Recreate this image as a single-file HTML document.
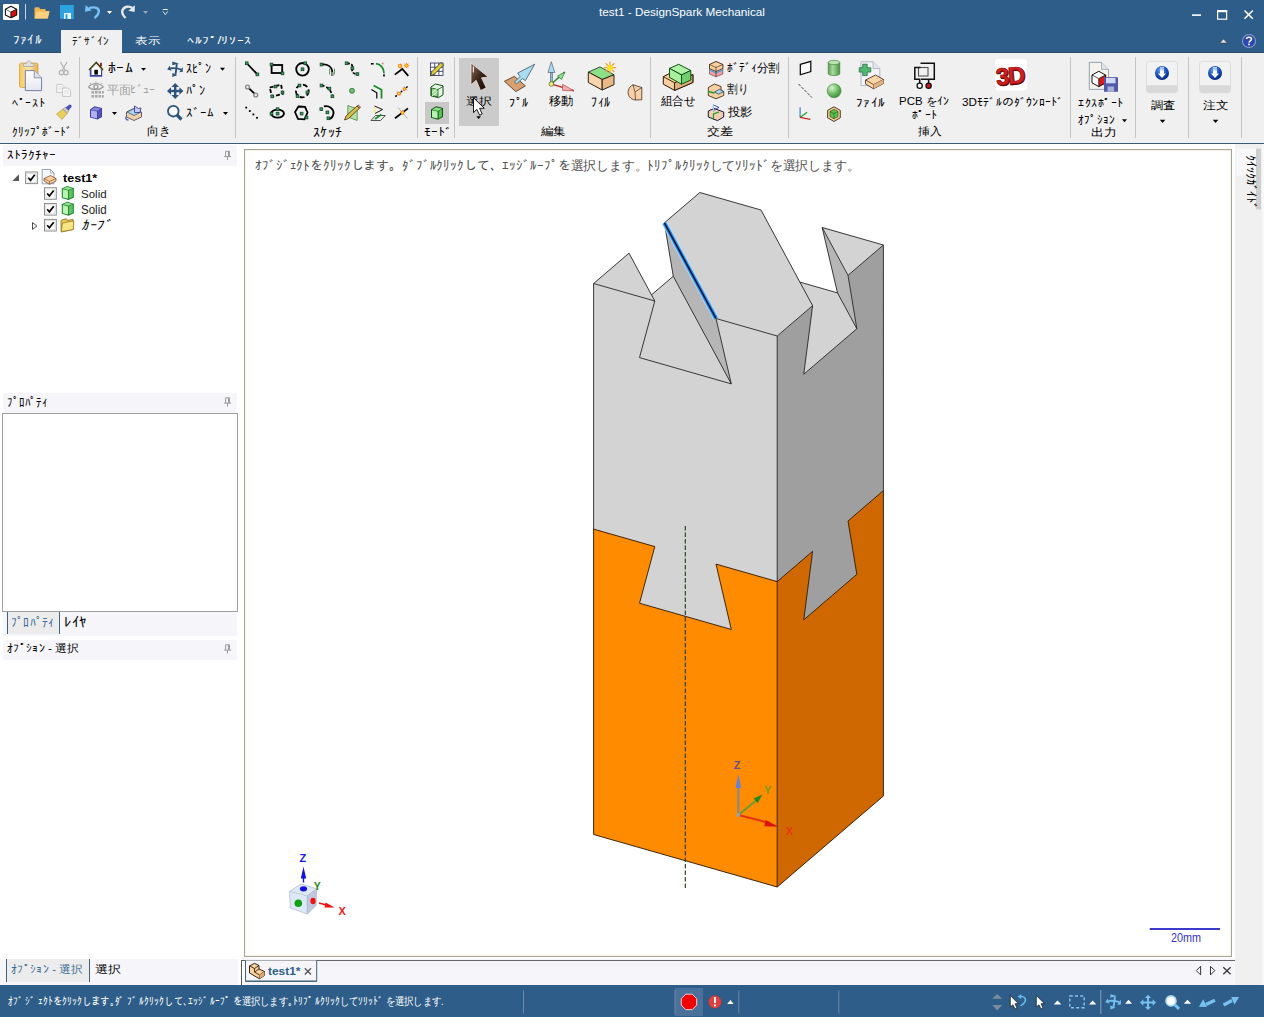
<!DOCTYPE html>
<html><head><meta charset="utf-8">
<style>
html,body{margin:0;padding:0;width:1264px;height:1017px;overflow:hidden;background:#f0f0f0;font-family:"Liberation Sans",sans-serif;font-size:13px;color:#000;}
.a{position:absolute;white-space:nowrap;line-height:1;transform-origin:0 0;}
.b{position:absolute;}
</style></head><body>
<!-- title bar + tab row -->
<div class="b" style="left:0;top:0;width:1264px;height:53px;background:#2d5d88"></div>
<div class="b" style="left:0;top:52px;width:1264px;height:1px;background:#2a4c6c"></div>
<div class="b" style="left:61px;top:30px;width:61px;height:23px;background:#f0f0f0"></div>
<!-- ribbon -->
<div class="b" style="left:0;top:53px;width:1264px;height:89px;background:#f0f0f0"></div>
<div class="b" style="left:0;top:142px;width:1264px;height:1px;background:#e6f4fb"></div>
<div class="b" style="left:0;top:143px;width:1264px;height:1px;background:#44586c"></div>
<!-- left panel -->
<div class="b" style="left:0;top:144px;width:241px;height:815px;background:#fff"></div>
<div class="b" style="left:3px;top:145px;width:234px;height:21px;background:#f5f5fa"></div>
<div class="b" style="left:3px;top:393px;width:234px;height:20px;background:#f5f5fa"></div>
<div class="b" style="left:2px;top:413px;width:234px;height:197px;border:1px solid #a0a0a0;background:#fff"></div>
<div class="b" style="left:3px;top:612px;width:234px;height:24px;background:#f5f5fa"></div>
<div class="b" style="left:7px;top:612px;width:51px;height:22px;background:#ececec;border-left:1px solid #3c6382;border-right:1px solid #3c6382"></div>
<div class="b" style="left:3px;top:640px;width:234px;height:20px;background:#f5f5fa"></div>
<!-- viewport -->
<div class="b" style="left:241px;top:144px;width:994px;height:814px;background:#fff"></div>
<div class="b" style="left:244px;top:149px;width:986px;height:806px;border:1px solid #a7a596;background:#fff;box-shadow:inset 0 0 0 1px #f6f4e6"></div>
<!-- right strip -->
<div class="b" style="left:1235px;top:144px;width:29px;height:841px;background:#f0f0f0"></div>
<div class="b" style="left:1262px;top:144px;width:2px;height:841px;background:#f8f8f8"></div>
<!-- bottom tab bar -->
<div class="b" style="left:0;top:959px;width:238px;height:26px;background:#f5f5fa"></div>
<div class="b" style="left:6px;top:959px;width:82px;height:23px;background:#ececec;border-left:1px solid #3c6382;border-right:1px solid #3c6382"></div>
<div class="b" style="left:241px;top:958px;width:994px;height:27px;background:#f5f5fa"></div>
<div class="b" style="left:238px;top:958px;width:3px;height:27px;background:#fff"></div>
<!-- status bar -->
<div class="b" style="left:0;top:985px;width:1264px;height:32px;background:#2d5d88"></div>

<svg style="position:absolute;left:0;top:0" width="1264" height="1017" viewBox="0 0 1264 1017">
<polygon points="639.50,357.62 731.30,383.88 673.25,276.25 620.15,321.75" fill="#d3d3d3"/>
<polygon points="716.00,318.50 664.40,222.83 673.25,276.25 731.30,383.88" fill="#b6b6b6"/>
<polygon points="803.75,374.25 856.85,328.75 837.50,292.88 745.70,266.62" fill="#d3d3d3"/>
<polygon points="822.20,227.50 848.00,275.33 856.85,328.75 837.50,292.88" fill="#b6b6b6"/>
<polygon points="593.60,283.50 654.80,301.00 639.50,357.62 731.30,383.88 716.00,318.50 777.20,336.00 777.20,581.60 716.00,564.10 731.30,629.48 639.50,603.23 654.80,546.60 593.60,529.10" fill="#d3d3d3"/>
<polygon points="777.20,336.00 812.60,305.67 803.75,374.25 856.85,328.75 848.00,275.33 883.40,245.00 883.40,490.60 848.00,520.93 856.85,574.35 803.75,619.85 812.60,551.27 777.20,581.60" fill="#9f9f9f"/>
<polygon points="593.60,529.10 654.80,546.60 639.50,603.23 731.30,629.48 716.00,564.10 777.20,581.60 777.20,887.00 593.60,834.50" fill="#ff8c00"/>
<polygon points="777.20,581.60 812.60,551.27 803.75,619.85 856.85,574.35 848.00,520.93 883.40,490.60 883.40,796.00 777.20,887.00" fill="#cf6800"/>
<polygon points="593.60,283.50 654.80,301.00 629.00,253.17" fill="#d3d3d3"/>
<polygon points="664.40,222.83 699.80,192.50 761.00,210.00 812.60,305.67 777.20,336.00 716.00,318.50" fill="#d3d3d3"/>
<polygon points="822.20,227.50 883.40,245.00 848.00,275.33" fill="#d3d3d3"/>
<path d="M629.00,253.17 L593.60,283.50 L654.80,301.00 L629.00,253.17 M664.40,222.83 L699.80,192.50 L761.00,210.00 L812.60,305.67 L777.20,336.00 L716.00,318.50 M822.20,227.50 L883.40,245.00 L848.00,275.33 L822.20,227.50 M654.80,301.00 L639.50,357.62 L731.30,383.88 L716.00,318.50 M812.60,305.67 L803.75,374.25 L856.85,328.75 L848.00,275.33 M664.40,222.83 L673.25,276.25 L731.30,383.88 M856.85,328.75 L837.50,292.88 L822.20,227.50 M673.25,276.25 L651.50,294.89 M837.50,292.88 L799.90,282.12 M593.60,283.50 L593.60,529.10 M777.20,336.00 L777.20,581.60 M883.40,245.00 L883.40,490.60" fill="none" stroke="#242424" stroke-width="0.9" stroke-linejoin="miter"/>
<path d="M593.60,529.10 L654.80,546.60 L639.50,603.23 L731.30,629.48 L716.00,564.10 L777.20,581.60 L812.60,551.27 L803.75,619.85 L856.85,574.35 L848.00,520.93 L883.40,490.60 M593.60,529.10 L593.60,834.50 L777.20,887.00 L883.40,796.00 L883.40,490.60 M777.20,581.60 L777.20,887.00" fill="none" stroke="#2a1400" stroke-width="0.9" stroke-linejoin="miter"/>

<!-- app icon -->
<rect x="3" y="4" width="16" height="16" rx="1.2" fill="#fff"/>
<path d="M11 6.3 L16.6 9.2 L16.6 14.9 L10.9 17.7 L5.4 14.9 L5.4 9.2 Z" fill="#fff" stroke="#111" stroke-width="1.1" stroke-linejoin="round"/>
<path d="M10.9 12 L16.6 9.2 L16.6 14.9 L10.9 17.7 Z" fill="#e01010" stroke="#111" stroke-width="0.9" stroke-linejoin="round"/>
<path d="M5.4 9.2 L10.9 12" stroke="#111" stroke-width="0.6" fill="none"/>
<rect x="25" y="4" width="1" height="15.5" fill="#c6d6e6"/>
<!-- folder -->
<path d="M34.5 8 L34.5 18.5 L48 18.5 L49.5 11 L45.5 11 L45.5 9 L40 9 L39 7.2 L35.5 7.2 Z" fill="#f4b54e"/>
<path d="M34.5 18.5 L37 11.5 L49.5 11.5 L47.5 18.5 Z" fill="#fcd07e"/>
<!-- save -->
<path d="M60 5 L73.8 5 L73.8 19 L61 19 L60 18 Z" fill="#2ca2e0"/>
<rect x="64" y="13" width="7" height="6" fill="#e8f6ff"/>
<rect x="65.5" y="14.2" width="2" height="4.8" fill="#2ca2e0"/>
<!-- undo -->
<path d="M89 8.2 C95 6 99.5 8.5 98.8 12 C98.3 14.5 96.5 16.5 94.5 18.2" fill="none" stroke="#78c0f6" stroke-width="2.4" stroke-linecap="butt"/>
<path d="M85 11.8 L85.6 5 L91.6 10.6 Z" fill="#78c0f6"/>
<path d="M107 11 L112 11 L109.5 14 Z" fill="#fff"/>
<!-- redo -->
<path d="M125.5 18 C123 15.5 121.5 13 122.5 10 C124 6.5 129 5.5 132.5 8" fill="none" stroke="#e8e8ec" stroke-width="2.4"/>
<path d="M135 5.3 L134.6 12 L128.4 10.8 Z" fill="#e8e8ec"/>
<path d="M143 11 L148 11 L145.5 14 Z" fill="#9aa6b4"/>
<!-- customize -->
<rect x="162.8" y="9" width="5" height="1" fill="#e8eef4"/>
<path d="M162.8 11.3 L165.3 14.6 L167.8 11.3" fill="none" stroke="#e8eef4" stroke-width="0.9"/>
<!-- window controls -->
<rect x="1192" y="14.3" width="9" height="1.6" fill="#fff"/>
<rect x="1217.6" y="10.6" width="9" height="8.6" fill="none" stroke="#fff" stroke-width="1.2"/>
<rect x="1217" y="10" width="10.2" height="2.2" fill="#fff"/>
<path d="M1244.5 10.5 L1252.8 18.8 M1252.8 10.5 L1244.5 18.8" stroke="#fff" stroke-width="1.6"/>
<path d="M1219.8 43 L1223.5 39 L1227.2 43 Z" fill="#e6e6e6" stroke="#333" stroke-width="0.5"/>
<circle cx="1249" cy="41" r="7" fill="#8aa0c8"/>
<circle cx="1249" cy="41" r="6" fill="#2a48b0"/>
<path d="M1246.5 39 C1246.5 36.5 1251.5 36.5 1251.5 39 C1251.5 40.8 1249 40.8 1249 42.6" fill="none" stroke="#fff" stroke-width="1.5"/>
<rect x="1248.2" y="43.6" width="1.7" height="1.7" fill="#fff"/>
<!-- separators -->
<g fill="#c4c4c4">
<rect x="79" y="57" width="1" height="81"/>
<rect x="235" y="57" width="1" height="81"/>
<rect x="417" y="57" width="1" height="81"/>
<rect x="454" y="57" width="1" height="81"/>
<rect x="650" y="57" width="1" height="81"/>
<rect x="788" y="57" width="1" height="81"/>
<rect x="1070" y="57" width="1" height="81"/>
<rect x="1135" y="57" width="1" height="81"/>
<rect x="1188" y="57" width="1" height="81"/>
<rect x="1241" y="57" width="1" height="81"/>
</g>
<!-- paste -->
<defs>
<linearGradient id="gclip" x1="0" x2="1"><stop offset="0" stop-color="#f6c860"/><stop offset="0.5" stop-color="#fbe6a8"/><stop offset="1" stop-color="#e8b050"/></linearGradient>
<linearGradient id="gpaper" x1="0" y1="0" x2="0" y2="1"><stop offset="0" stop-color="#ffffff"/><stop offset="1" stop-color="#e6e6f2"/></linearGradient>
<radialGradient id="gblue" cx="0.4" cy="0.3" r="0.7"><stop offset="0" stop-color="#6aa0f0"/><stop offset="0.6" stop-color="#1a4fb8"/><stop offset="1" stop-color="#0a2a80"/></radialGradient>
<radialGradient id="ggreen" cx="0.35" cy="0.3" r="0.75"><stop offset="0" stop-color="#d8f4d0"/><stop offset="0.6" stop-color="#68b860"/><stop offset="1" stop-color="#3a8a38"/></radialGradient>
<linearGradient id="gcyl" x1="0" x2="1"><stop offset="0" stop-color="#5aa050"/><stop offset="0.4" stop-color="#a8dca0"/><stop offset="1" stop-color="#4a9044"/></linearGradient>
<linearGradient id="gsel" x1="0" y1="0" x2="1" y2="1"><stop offset="0" stop-color="#8a7060"/><stop offset="0.5" stop-color="#3a2418"/><stop offset="1" stop-color="#140800"/></linearGradient>
</defs>
<rect x="19.5" y="63" width="18.5" height="24.5" rx="2" fill="url(#gclip)" stroke="#d8a040" stroke-width="0.8"/>
<path d="M23.5 66.5 L23.5 63.5 L26.5 63.5 C26.5 60 31 60 31 63.5 L33.8 63.5 L33.8 66.5 Z" fill="#e0e0e0" stroke="#a8a8a8" stroke-width="0.8"/>
<path d="M25.3 70.6 L34.2 70.6 L41.6 77.8 L41.6 90.6 L25.3 90.6 Z" fill="url(#gpaper)" stroke="#7482a4" stroke-width="1"/>
<path d="M34.2 70.6 L34.2 77.8 L41.6 77.8" fill="#dde0ee" stroke="#7482a4" stroke-width="0.8"/>
<!-- scissors -->
<path d="M60.5 62 L65 70 M67 62 L62.5 70" stroke="#b0b0b0" stroke-width="1.2" fill="none"/>
<circle cx="61.5" cy="72.6" r="2.2" fill="none" stroke="#b4b4b4" stroke-width="1.3"/>
<circle cx="66" cy="72.6" r="2.2" fill="none" stroke="#b4b4b4" stroke-width="1.3"/>
<!-- copy -->
<path d="M56.7 84.5 L62 84.5 L64 86.5 L64 92.5 L56.7 92.5 Z" fill="#f8f8f8" stroke="#c4c4c4" stroke-width="0.9"/>
<path d="M62.5 88 L68 88 L70.6 90.6 L70.6 96.4 L62.5 96.4 Z" fill="#f8f8f8" stroke="#c0c0c0" stroke-width="0.9"/>
<path d="M58 87 L62 87 M58 89 L62 89 M64 91 L69 91 M64 93 L69 93" stroke="#d0d0d0" stroke-width="0.6"/>
<!-- brush -->
<path d="M56.5 114 L63 109 L67 113.5 L62 119.5 Z" fill="#e8d060" stroke="#b09030" stroke-width="0.6"/>
<path d="M63 109 L65.5 107 L69 110.5 L67 113.5 Z" fill="#c8c8c8" stroke="#808080" stroke-width="0.5"/>
<path d="M65.5 107.5 L69.5 104.5 C71.5 104.5 72 106 71.5 107 L68.5 110.5 Z" fill="#5050b8"/>
<!-- home -->
<path d="M89.8 76.8 L89.8 69.5 L92 69.5 L92 74.8 L100 74.8 L100 69.5 L102.2 69.5 L102.2 76.8 Z" fill="#3e45a0"/>
<path d="M91.5 70 L96.2 65.5 L101 70 L101 75 L91.5 75 Z" fill="#fff"/>
<rect x="94.3" y="69.8" width="3.6" height="4.8" fill="#000"/>
<path d="M89 70 L96.3 62.5 L103 70" fill="none" stroke="#454010" stroke-width="1.6"/>
<rect x="100.1" y="62.8" width="1.7" height="3.6" fill="#701010"/>
<path d="M141 68 L146 68 L143.5 70.8 Z" fill="#000"/>
<!-- spin -->
<g id="spin" fill="#2d5478">
<path d="M176.8 64 C176.3 67.5 176.3 71 175.3 74.8" fill="none" stroke="#2d5478" stroke-width="1.9"/>
<path d="M170.5 68.3 C174 67.8 178 68.3 181.5 69.6" fill="none" stroke="#2d5478" stroke-width="1.9"/>
<path d="M172.3 61.6 L178.8 63.4 L172.3 65.2 Z"/>
<path d="M172.3 73 L177.2 75.2 L172.3 77 Z"/>
<path d="M167.2 69.6 L169.6 65.8 L171.6 70.8 Z"/>
<path d="M182.8 67 L179.2 72.3 L182.8 71.8 Z"/>
</g>
<path d="M220 67.7 L225 67.7 L222.5 70.7 Z" fill="#000"/>
<!-- plan view (gray) -->
<g fill="none" stroke="#a0a0a0">
<path d="M88.5 87 C92 82.5 99.5 82.5 103.3 87 C99.5 90.5 92 90.5 88.5 87 Z" stroke-width="1.2"/>
<circle cx="95.9" cy="86.8" r="2" stroke-width="1.3"/>
<path d="M91 84 L90 82.8 M95.9 83 L95.9 81.5 M101 84 L102 82.8" stroke-width="0.8"/>
</g>
<g fill="#a8a8a8">
<rect x="91.5" y="91" width="2.6" height="2.6"/><rect x="95" y="91" width="2.6" height="2.6"/><rect x="98.5" y="91" width="2.6" height="2.6"/><rect x="102" y="91" width="1.8" height="2.6"/>
<rect x="91.5" y="95" width="2.6" height="2.6"/><rect x="95" y="95" width="2.6" height="2.6"/><rect x="98.5" y="95" width="2.6" height="2.6"/><rect x="102" y="95" width="1.8" height="2.6"/>
</g>
<!-- pan -->
<g fill="#2d5478">
<rect x="174" y="86" width="2.4" height="10"/>
<rect x="170" y="89.8" width="10.4" height="2.4"/>
<path d="M175.2 83 L179 87 L171.4 87 Z"/>
<path d="M175.2 99 L179 95 L171.4 95 Z"/>
<path d="M167 91 L171 87.2 L171 94.8 Z"/>
<path d="M183.4 91 L179.4 87.2 L179.4 94.8 Z"/>
</g>
<!-- cube (view) -->
<path d="M90 109.5 L94.5 106.3 L102 108 L102 117 L97.5 119.6 L90 117.5 Z" fill="#3a3a9a"/>
<path d="M91 110.2 L97 111.5 L97 118.5 L91 117 Z" fill="#b0b0f4"/>
<path d="M91 109.8 L94.8 107.3 L101 108.6 L97.2 111 Z" fill="#8484dc"/>
<path d="M97.8 111 L101.2 108.8 L101.2 116.6 L97.8 118.8 Z" fill="#5454b8"/>
<path d="M112 112 L117 112 L114.5 115 Z" fill="#000"/>
<!-- blueprint -->
<path d="M126.5 112 L134 108.5 L141.5 112 L141.5 117 L134 120.5 L126.5 117 Z" fill="#f0d0a8" stroke="#404060" stroke-width="0.8"/>
<path d="M127 112 L134 108.7 L141 112 L134 115.5 Z" fill="#a8d8f0" stroke="#304060" stroke-width="0.7"/>
<path d="M134.5 106 L134.5 112.5 L140 112.5 L141 108 L138.5 108.5 Z" fill="#c8c8f8" stroke="#303080" stroke-width="0.8"/>
<path d="M126.5 116.5 C125 118 126 120 128.5 120" fill="none" stroke="#6868b8" stroke-width="1.5"/>
<!-- zoom -->
<circle cx="173.3" cy="111.2" r="5.3" fill="#fff" stroke="#2d5478" stroke-width="1.8"/>
<path d="M177 115 L181.5 119.5" stroke="#2d5478" stroke-width="3.2"/>
<path d="M223 112 L228 112 L225.5 115 Z" fill="#000"/>
<path d="M247 63.5 L257.2 74.2" stroke="#000" fill="none" stroke-width="1.8"/>
<rect x="245.3" y="61.9" width="2.8" height="2.8" fill="#3a9a60" stroke="#0c3c1c" stroke-width="0.7"/>
<rect x="256.0" y="73.0" width="2.8" height="2.8" fill="#3a9a60" stroke="#0c3c1c" stroke-width="0.7"/>
<rect x="271.6" y="65" width="10.6" height="8" stroke="#000" fill="none" stroke-width="1.8"/>
<rect x="270.1" y="63.1" width="2.8" height="2.8" fill="#3a9a60" stroke="#0c3c1c" stroke-width="0.7"/>
<rect x="281.1" y="72.0" width="2.8" height="2.8" fill="#3a9a60" stroke="#0c3c1c" stroke-width="0.7"/>
<circle cx="302.5" cy="69.3" r="6.3" stroke="#000" fill="none" stroke-width="1.8"/>
<rect x="301.1" y="67.9" width="2.8" height="2.8" fill="#3a9a60" stroke="#0c3c1c" stroke-width="0.7"/>
<rect x="303.9" y="61.9" width="2.8" height="2.8" fill="#3a9a60" stroke="#0c3c1c" stroke-width="0.7"/>
<path d="M321.5 64.5 C327 63.5 332.3 66.5 332.3 72.5 L332.3 76" stroke="#000" fill="none" stroke-width="1.8"/>
<path d="M329.6 68.5 L329.6 74.5 M334.5 68.5 L334.5 74.5" stroke="#2a8a40" stroke-width="0.8" fill="none"/>
<rect x="331.4" y="72" width="1.8" height="4" fill="#888"/>
<rect x="320.1" y="63.1" width="2.8" height="2.8" fill="#3a9a60" stroke="#0c3c1c" stroke-width="0.7"/>
<path d="M346.8 63.3 C352 63 353 66 352.4 68.3 C351.5 70.5 352 74 357.4 74.1" stroke="#000" fill="none" stroke-width="1.7" stroke-dasharray="3 1.5"/>
<rect x="345.2" y="61.9" width="2.8" height="2.8" fill="#3a9a60" stroke="#0c3c1c" stroke-width="0.7"/>
<rect x="351.0" y="66.9" width="2.8" height="2.8" fill="#3a9a60" stroke="#0c3c1c" stroke-width="0.7"/>
<rect x="356.0" y="72.7" width="2.8" height="2.8" fill="#3a9a60" stroke="#0c3c1c" stroke-width="0.7"/>
<path d="M370.9 63.8 L373.6 63.8" stroke="#000" stroke-width="1.6"/>
<path d="M375.9 63.6 C380.5 64 384 68 384 73.2" stroke="#1a8a2a" stroke-width="1.7" fill="none"/>
<path d="M384 74.2 L384 76.6" stroke="#000" stroke-width="1.6"/>
<path d="M381.5 62.8 L383.5 62.8 L383.3 65 Z" fill="#c87060"/>
<path d="M394.8 74.6 L402.3 69 L408.3 75.9" stroke="#000" fill="none" stroke-width="1.8"/>
<polygon points="403.20,66.00 401.68,66.61 402.32,68.12 400.81,67.48 400.20,69.00 399.59,67.48 398.08,68.12 398.72,66.61 397.20,66.00 398.72,65.39 398.08,63.88 399.59,64.52 400.20,63.00 400.81,64.52 402.32,63.88 401.68,65.39" fill="#f07010"/>
<circle cx="400.2" cy="66.0" r="1.3" fill="#ffd020"/>
<polygon points="409.50,65.60 407.98,66.21 408.62,67.72 407.11,67.08 406.50,68.60 405.89,67.08 404.38,67.72 405.02,66.21 403.50,65.60 405.02,64.99 404.38,63.48 405.89,64.12 406.50,62.60 407.11,64.12 408.62,63.48 407.98,64.99" fill="#f07010"/>
<circle cx="406.5" cy="65.6" r="1.3" fill="#ffd020"/>
<path d="M249 88.3 L254.5 93.7" stroke="#000" fill="none" stroke-width="1.8"/>
<circle cx="247.5" cy="87" r="1.9" fill="none" stroke="#888" stroke-width="1.4"/><circle cx="255.8" cy="95" r="1.9" fill="none" stroke="#888" stroke-width="1.4"/>
<path d="M269.7 87.5 L281.1 84.6 L282.7 93.8 L272 96.6 Z" stroke="#000" fill="none" stroke-width="1.8" stroke-dasharray="4 2"/>
<rect x="274.1" y="85.1" width="2.8" height="2.8" fill="#3a9a60" stroke="#0c3c1c" stroke-width="0.7"/>
<rect x="281.1" y="91.1" width="2.8" height="2.8" fill="#3a9a60" stroke="#0c3c1c" stroke-width="0.7"/>
<rect x="270.9" y="95.0" width="2.8" height="2.8" fill="#3a9a60" stroke="#0c3c1c" stroke-width="0.7"/>
<circle cx="302.3" cy="91" r="6.4" stroke="#000" fill="none" stroke-width="1.8" stroke-dasharray="5 2.5"/>
<rect x="298.1" y="84.1" width="2.8" height="2.8" fill="#3a9a60" stroke="#0c3c1c" stroke-width="0.7"/>
<rect x="306.0" y="91.0" width="2.8" height="2.8" fill="#3a9a60" stroke="#0c3c1c" stroke-width="0.7"/>
<rect x="296.1" y="94.8" width="2.8" height="2.8" fill="#3a9a60" stroke="#0c3c1c" stroke-width="0.7"/>
<path d="M321.5 85.5 C327 86 331 90 332.4 96.3" stroke="#000" fill="none" stroke-width="1.7" stroke-dasharray="3 2"/>
<rect x="320.1" y="84.1" width="2.8" height="2.8" fill="#3a9a60" stroke="#0c3c1c" stroke-width="0.7"/>
<rect x="328.0" y="87.2" width="2.8" height="2.8" fill="#3a9a60" stroke="#0c3c1c" stroke-width="0.7"/>
<rect x="331.0" y="94.9" width="2.8" height="2.8" fill="#3a9a60" stroke="#0c3c1c" stroke-width="0.7"/>
<circle cx="352" cy="90.8" r="2.5" fill="#6cc070" stroke="#207030" stroke-width="0.8"/>
<path d="M371.4 89.6 L376.8 92.8 L376.8 98.5" stroke="#000" fill="none" stroke-width="1.2"/>
<path d="M373.6 85.5 L381.5 89.8 L381.5 98.5" stroke="#1a8a2a" fill="none" stroke-width="1.8"/>
<path d="M395.3 96.7 L408.3 85.9" stroke="#000" stroke-width="1.5" stroke-dasharray="2 1.5"/>
<path d="M396.5 91 L400 95.5 M404 86 L407.5 90.5" stroke="#a0a0a0" stroke-width="0.6"/>
<polygon points="401.60,93.60 400.29,94.14 400.84,95.44 399.54,94.89 399.00,96.20 398.46,94.89 397.16,95.44 397.71,94.14 396.40,93.60 397.71,93.06 397.16,91.76 398.46,92.31 399.00,91.00 399.54,92.31 400.84,91.76 400.29,93.06" fill="#f07010"/>
<circle cx="399.0" cy="93.6" r="1.1" fill="#ffd020"/>
<polygon points="407.10,89.00 405.79,89.54 406.34,90.84 405.04,90.29 404.50,91.60 403.96,90.29 402.66,90.84 403.21,89.54 401.90,89.00 403.21,88.46 402.66,87.16 403.96,87.71 404.50,86.40 405.04,87.71 406.34,87.16 405.79,88.46" fill="#f07010"/>
<circle cx="404.5" cy="89.0" r="1.1" fill="#ffd020"/>
<rect x="245.3" y="106.7" width="1.8" height="1.8" fill="#000"/>
<rect x="248.9" y="110.1" width="1.8" height="1.8" fill="#000"/>
<rect x="252.5" y="113.5" width="1.8" height="1.8" fill="#000"/>
<rect x="256.1" y="116.9" width="1.8" height="1.8" fill="#000"/>
<ellipse cx="277.6" cy="113.6" rx="6.4" ry="4" stroke="#000" fill="none" stroke-width="1.8"/>
<rect x="270.1" y="112.2" width="2.8" height="2.8" fill="#3a9a60" stroke="#0c3c1c" stroke-width="0.7"/>
<rect x="276.2" y="107.8" width="2.8" height="2.8" fill="#3a9a60" stroke="#0c3c1c" stroke-width="0.7"/>
<rect x="276.2" y="112.2" width="2.8" height="2.8" fill="#3a9a60" stroke="#0c3c1c" stroke-width="0.7"/>
<path d="M298.5 106.5 L305 106.8 L307.5 112.5 L304.5 119.3 L298 118.8 L295 112 Z" stroke="#000" fill="none" stroke-width="1.8"/>
<rect x="300.2" y="112.2" width="2.8" height="2.8" fill="#3a9a60" stroke="#0c3c1c" stroke-width="0.7"/>
<rect x="305.1" y="116.1" width="2.8" height="2.8" fill="#3a9a60" stroke="#0c3c1c" stroke-width="0.7"/>
<path d="M323.9 106.4 C329 105 334 109 333.5 113.5 C333 116.5 331 118.5 329 119" stroke="#000" fill="none" stroke-width="1.8"/>
<rect x="319.9" y="107.8" width="2.8" height="2.8" fill="#3a9a60" stroke="#0c3c1c" stroke-width="0.7"/>
<rect x="326.0" y="111.0" width="2.8" height="2.8" fill="#3a9a60" stroke="#0c3c1c" stroke-width="0.7"/>
<rect x="327.0" y="116.9" width="2.8" height="2.8" fill="#3a9a60" stroke="#0c3c1c" stroke-width="0.7"/>
<path d="M347.8 105.5 L357.2 109 L357.2 120.5 L347.8 117 Z" fill="#b8e0a8" stroke="#4a8a40" stroke-width="0.8"/>
<path d="M344.5 120 L346 116 L357 106 L359.5 108.2 L348.5 118.5 Z" fill="#d8c048" stroke="#403010" stroke-width="0.8"/>
<path d="M357 106 L358.2 104.9 L360.6 107.1 L359.5 108.2 Z" fill="#e09080" stroke="#403010" stroke-width="0.6"/>
<path d="M371 120.5 L375.5 115.5 L385.3 115.5 L380.5 120.5 Z" fill="none" stroke="#404040" stroke-width="0.9"/>
<path d="M374.5 106 L382.5 109.5 L375 113.5" fill="none" stroke="#000" stroke-width="0.9"/>
<rect x="373.6" y="107" width="1.6" height="6.5" fill="#f0f080"/>
<path d="M375 119 L381.5 114.5" stroke="#1a8a2a" stroke-width="1.8"/>
<path d="M395 118.3 L408 108.4" stroke="#000" stroke-width="1.8"/>
<path d="M398 107.5 L407.5 118.5" stroke="#909090" stroke-width="0.7"/>
<polygon points="405.30,112.50 403.89,113.07 404.48,114.48 403.07,113.89 402.50,115.30 401.93,113.89 400.52,114.48 401.11,113.07 399.70,112.50 401.11,111.93 400.52,110.52 401.93,111.11 402.50,109.70 403.07,111.11 404.48,110.52 403.89,111.93" fill="#f07010"/>
<circle cx="402.5" cy="112.5" r="1.2" fill="#ffd020"/>
<rect x="425" y="102" width="24" height="22" fill="#c8c8c8"/>
<rect x="430.5" y="63" width="12.5" height="12.5" fill="#fff" stroke="#404070" stroke-width="0.9"/>
<path d="M434.7 63 V75.5 M438.9 63 V75.5 M430.5 67.2 H443 M430.5 71.4 H443" stroke="#404070" stroke-width="0.9"/>
<path d="M430.5 76 L432 71.5 L441 62.5 L443.5 65 L434.5 74 Z" fill="#e0d040" stroke="#303010" stroke-width="0.8"/>
<path d="M430.9 87 L435.5 84 L443 85.8 L443 94.8 L438.5 97.6 L430.9 95.8 Z" fill="#e8f8e8" stroke="#105010" stroke-width="1"/>
<path d="M431.5 88 L438 89.5 L438 97 L431.5 95.5 Z" fill="#98d890" stroke="#105010" stroke-width="0.8"/>
<path d="M432 93 L437 88.5 M432 96 L437.5 91.5" stroke="#e8f8e8" stroke-width="1"/>
<path d="M438 89.5 L443 86.5" stroke="#105010" stroke-width="0.8"/>
<path d="M431 109.5 L436 106.3 L443 108 L443 117 L438 119.8 L431 117.8 Z" fill="#105010"/>
<path d="M432 110.3 L437.6 111.6 L437.6 118.6 L432 117.2 Z" fill="#b4f4b0"/>
<path d="M432.2 109.8 L436.2 107.3 L442 108.7 L438 111 Z" fill="#88e088"/>
<path d="M438.6 111.2 L442 109 L442 116.6 L438.6 118.8 Z" fill="#58c058"/>
<!-- select highlight + arrow -->
<rect x="459" y="58" width="40" height="68" fill="#cbcbcb"/>
<path d="M471 63 L471 84.8 L476.2 80.3 L480.6 90.5 L486.2 87.8 L481.5 77.8 L488.2 77 Z" fill="url(#gsel)" stroke="#f8e8e0" stroke-width="0.7" stroke-linejoin="round"/>
<rect x="472.8" y="66.5" width="1.2" height="6" fill="#e8e0e0"/>
<path d="M476.3 116.2 L481 116.2 L478.65 119 Z" fill="#000"/>
<!-- pull -->
<path d="M504.4 81.3 L514.4 76.3 L525.4 85.9 L515.8 91.6 Z" fill="#d8a070" stroke="#403020" stroke-width="0.8"/>
<path d="M514.5 82 L520 76.5 L517.6 73.1 L534.7 64.2 L525.4 80.6 L522.3 78.6 L516.5 84 Z" fill="#a8dcf0" stroke="#304050" stroke-width="0.7"/>
<!-- move -->
<path d="M551.3 84 L573.9 90.8" stroke="#c04040" stroke-width="1.5"/>
<path d="M562.6 84.3 L573.9 90.8 L562.6 90.4 Z" fill="#f0b0b0" stroke="#a03030" stroke-width="0.6"/>
<path d="M551.3 84 L564.8 72.1" stroke="#308030" stroke-width="1.5"/>
<path d="M564.8 72.1 L557.5 76 L561.5 79.5 Z" fill="#90e090" stroke="#206020" stroke-width="0.6"/>
<rect x="550.3" y="72.5" width="2.1" height="11.5" fill="#90b8d8" stroke="#405060" stroke-width="0.5"/>
<path d="M551.3 61.7 L554.8 72.5 L548 72.5 Z" fill="#b0d8f0" stroke="#405060" stroke-width="0.6"/>
<circle cx="551.3" cy="84" r="2.3" fill="#f0f080" stroke="#606020" stroke-width="0.7"/>
<!-- fill -->
<path d="M588.3 72.1 L600 66.9 L614 74.7 L602.2 79.5 Z" fill="#8ce088" stroke="#103010" stroke-width="0.8"/>
<path d="M588.3 72.1 L602.2 79.5 L602.2 90 L588.3 82.5 Z" fill="#f8d4ac" stroke="#1a1000" stroke-width="0.9"/>
<path d="M602.2 79.5 L614 74.7 L614 84.7 L602.2 90 Z" fill="#e8b888" stroke="#1a1000" stroke-width="0.9"/>
<g stroke="#f0a040" stroke-width="1.3"><path d="M610 61.5 L610 74 M603.8 67.7 L616.2 67.7 M605.6 63.3 L614.4 72.1 M614.4 63.3 L605.6 72.1"/></g>
<circle cx="610" cy="67.7" r="3" fill="#ffe020"/>
<!-- small intersect icon -->
<path d="M633 84.8 L641.8 87.5 L641.8 99.8 L635.5 100 C630 99.5 627.5 95 628.2 91 C629 87.5 631 85.5 633 84.8 Z" fill="#f8d0a8" stroke="#403020" stroke-width="0.8"/>
<path d="M633 84.8 L635 92 L641.8 87.5 M635 92 L635.5 100" fill="none" stroke="#403020" stroke-width="0.7"/>
<!-- combine -->
<path d="M663.3 76.6 L669.5 73.5 L681.5 79.5 L692.9 74.6 L692.9 82.5 L674.6 90.4 L663.3 84.2 Z" fill="#f8d0a0" stroke="#301800" stroke-width="1"/>
<path d="M674.6 82.8 L674.6 90.4 L692.9 82.5 L692.9 74.6 Z" fill="#e0b080" stroke="#301800" stroke-width="1"/>
<path d="M663.3 76.6 L674.6 82.8" stroke="#301800" stroke-width="0.9"/>
<path d="M669.5 68.4 L678.7 64.3 L690.8 70.5 L681.5 74.9 Z" fill="#b0f4a8" stroke="#105010" stroke-width="1"/>
<path d="M669.5 68.4 L681.5 74.9 L681.5 84.2 L669.5 77.4 Z" fill="#a8f0a0" stroke="#105010" stroke-width="1"/>
<path d="M681.5 74.9 L690.8 70.5 L690.8 80.1 L681.5 84.2 Z" fill="#70d070" stroke="#105010" stroke-width="1"/>
<!-- body split -->
<path d="M709.5 64.5 L716 61.5 L722.8 64.5 L722.8 74 L716 76.8 L709.5 74 Z" fill="#f0a0a0" stroke="#603030" stroke-width="0.6"/>
<path d="M709.5 64.5 L716 61.5 L722.8 64.5 L722.8 68.5 L716 71.5 L709.5 68.5 Z" fill="#f8d0a0" stroke="#301800" stroke-width="0.7"/>
<path d="M709.3 69.8 L716 72.8 L723 69.8" fill="none" stroke="#40a0e0" stroke-width="1.2"/>
<path d="M709.5 64.5 L716 67.5 L722.8 64.5 M716 67.5 L716 76.8" fill="none" stroke="#301800" stroke-width="0.6"/>
<!-- split -->
<path d="M708.3 87.5 L714.5 84 L721 86.5 L721 90 L723.7 91.5 L723.7 95.5 L716 98.8 L708.3 95.5 Z" fill="#f8d0a0" stroke="#301800" stroke-width="0.8"/>
<path d="M714.5 92 L719.5 89.3 L723.7 91.5 L718.5 94.2 Z" fill="#a8d8f0" stroke="#203040" stroke-width="0.7"/>
<path d="M708.3 91.5 L714.5 93" stroke="#1a9a2a" stroke-width="1.3"/>
<!-- project -->
<path d="M708.3 111 L714 108.5 L723.7 112 L723.7 117 L717.5 120.6 L708.3 117 Z" fill="#f0d0b0" stroke="#201040" stroke-width="1"/>
<path d="M713.2 104.8 L719 107.5 L714 110" fill="none" stroke="#2030a0" stroke-width="0.8"/>
<rect x="712.8" y="105" width="1.3" height="7" fill="#90c8f0"/>
<path d="M713.5 120 L713.5 114 L719 112" fill="none" stroke="#1a9a2a" stroke-width="1.2"/>
<!-- insert: plane, line, axis -->
<path d="M800.3 64.3 L810.8 61.3 L810.8 71.6 L800.3 74.8 Z" fill="#fff" stroke="#000" stroke-width="1.2"/>
<path d="M798.5 84 L812 97.6" stroke="#404040" stroke-width="1" stroke-dasharray="3 1.3"/>
<path d="M800.1 107.3 L800.1 117.4" stroke="#3080d0" stroke-width="1.2"/>
<path d="M800.1 117.4 L807.1 112.3" stroke="#20a020" stroke-width="1.2"/>
<path d="M800.1 117.4 L810.3 119.3" stroke="#d02020" stroke-width="1.2"/>
<!-- cylinder, sphere, shell -->
<path d="M828.2 62.5 L828.2 73.5 C828.2 76.3 839.8 76.3 839.8 73.5 L839.8 62.5 Z" fill="url(#gcyl)" stroke="#3a7a30" stroke-width="0.6"/>
<ellipse cx="834" cy="62.5" rx="5.8" ry="2.2" fill="#b8e4b0" stroke="#3a7a30" stroke-width="0.6"/>
<circle cx="834.1" cy="90.8" r="7" fill="url(#ggreen)" stroke="#3a7a30" stroke-width="0.5"/>
<path d="M834 106.8 L840.3 110.3 L840.3 117.8 L834 121.5 L827.6 117.8 L827.6 110.3 Z" fill="#f0c890" stroke="#403020" stroke-width="0.9"/>
<path d="M830 111.5 L834 109.3 L838 111.5 L838 116.5 L834 118.8 L830 116.5 Z" fill="#60c050" stroke="#205010" stroke-width="0.6"/>
<path d="M834 113.5 L834 118.8 M830 111.5 L834 113.5 L838 111.5" fill="none" stroke="#205010" stroke-width="0.6"/>
<!-- file icon -->
<path d="M861 61.8 L873 61.8 L879.8 68.5 L879.8 85.6 L861 85.6 Z" fill="#f4f4f8" stroke="#a0a8c0" stroke-width="0.8"/>
<path d="M873 61.8 L873 68.5 L879.8 68.5" fill="#e0e4ee" stroke="#a0a8c0" stroke-width="0.7"/>
<path d="M862.7 64.2 L867.2 64.2 L867.2 67.7 L870.8 67.7 L870.8 72.1 L867.2 72.1 L867.2 75.6 L862.7 75.6 L862.7 72.1 L859.2 72.1 L859.2 67.7 L862.7 67.7 Z" fill="#50b870" stroke="#206030" stroke-width="0.7"/>
<path d="M865.5 80 L875.5 75 L883.5 79.5 L883.5 83.5 L873.5 88.8 L865.5 84 Z" fill="#f8d4a8" stroke="#402010" stroke-width="0.8"/>
<path d="M865.5 80 L873.5 84.5 L883.5 79.5 M873.5 84.5 L873.5 88.8" fill="none" stroke="#402010" stroke-width="0.7"/>
<path d="M873.5 84.5 L883.5 79.5 L883.5 83.5 L873.5 88.8 Z" fill="#e0b080"/>
<!-- PCB import -->
<g fill="none" stroke="#111" stroke-width="1.5">
<path d="M920.5 63.2 L934.3 63.2 L934.3 79.3 L921 79.3"/>
<rect x="918.5" y="67.5" width="9.5" height="8.5" stroke="#555" stroke-width="1.1"/>
<path d="M920.5 67.4 L914.8 67.4 L914.8 79.3 L920.5 79.3 M919.7 79.3 L919.7 83 M928.6 79.3 L928.6 83"/>
</g>
<circle cx="919.7" cy="85.7" r="2.6" fill="#fff" stroke="#111" stroke-width="1.3"/>
<circle cx="928.6" cy="85.7" r="2.6" fill="#d01818" stroke="#111" stroke-width="1.3"/>
<!-- 3D -->
<rect x="995" y="59" width="32" height="31.5" rx="3.5" fill="#fff"/>
<g transform="rotate(-5 1011 75)">
<text x="996.3" y="84.8" font-family="Liberation Sans" font-weight="bold" font-size="24" fill="#600808" stroke="#600808" stroke-width="1" letter-spacing="-1.2">3D</text>
<text x="995.6" y="84" font-family="Liberation Sans" font-weight="bold" font-size="24" fill="#d42020" stroke="#8a1010" stroke-width="0.5" letter-spacing="-1.2">3D</text>
</g>
<!-- export -->
<path d="M1089.3 62.4 L1101.5 62.4 L1108.5 69.4 L1108.5 89.4 L1089.3 89.4 Z" fill="#f4f4ee" stroke="#9098a8" stroke-width="0.9"/>
<path d="M1101.5 62.4 L1101.5 69.4 L1108.5 69.4" fill="#e4e6ec" stroke="#9098a8" stroke-width="0.7"/>
<path d="M1098.8 71.3 L1105.6 75 L1105.6 82.8 L1098.8 86.6 L1092 82.8 L1092 75 Z" fill="#fff" stroke="#111" stroke-width="1"/>
<path d="M1098.8 78.6 L1105.6 75 L1105.6 82.8 L1098.8 86.6 Z" fill="#e01818" stroke="#111" stroke-width="0.8"/>
<path d="M1092 75 L1098.8 78.6" stroke="#111" stroke-width="0.7"/>
<path d="M1104 77 L1117 77 L1118 78 L1118 91.7 L1104 91.7 Z" fill="#5058a8"/>
<rect x="1106" y="77.8" width="9.5" height="5.5" fill="#d0d8f8"/>
<rect x="1107.5" y="86.5" width="6.5" height="5.2" fill="#a8b0d8"/>
<!-- investigate / order buttons -->
<g>
<rect x="1146.5" y="61.3" width="31" height="31.5" rx="3" fill="#f2f2f2" stroke="#d8d8d8" stroke-width="0.8"/>
<path d="M1146.5 85.3 L1177.5 85.3 L1177.5 89.8 Q1177.5 92.8 1174.5 92.8 L1149.5 92.8 Q1146.5 92.8 1146.5 89.8 Z" fill="#d8d8d8"/>
<circle cx="1162" cy="73" r="7" fill="url(#gblue)"/>
<path d="M1158 73.5 L1166 73.5 L1162 78 Z" fill="#fff"/>
<rect x="1160" y="70.3" width="4" height="3.5" fill="#fff"/>
<rect x="1160" y="67.3" width="4" height="1.2" fill="#e0e8ff"/><rect x="1160" y="68.9" width="4" height="0.9" fill="#e0e8ff"/>
<path d="M1159.8 119.7 L1165.3 119.7 L1162.55 123 Z" fill="#000"/>
</g>
<g>
<rect x="1199.5" y="61.3" width="31" height="31.5" rx="3" fill="#f2f2f2" stroke="#d8d8d8" stroke-width="0.8"/>
<path d="M1199.5 85.3 L1230.5 85.3 L1230.5 89.8 Q1230.5 92.8 1227.5 92.8 L1202.5 92.8 Q1199.5 92.8 1199.5 89.8 Z" fill="#d8d8d8"/>
<circle cx="1215" cy="73" r="7" fill="url(#gblue)"/>
<path d="M1211 73.5 L1219 73.5 L1215 78 Z" fill="#fff"/>
<rect x="1213" y="70.3" width="4" height="3.5" fill="#fff"/>
<rect x="1213" y="67.3" width="4" height="1.2" fill="#e0e8ff"/><rect x="1213" y="68.9" width="4" height="0.9" fill="#e0e8ff"/>
<path d="M1212.8 119.7 L1218.3 119.7 L1215.55 123 Z" fill="#000"/>
</g>
<path d="M1122 119.3 L1127 119.3 L1124.5 122.3 Z" fill="#000"/>
<!-- pins -->
<g id="pin1" fill="none" stroke="#999" stroke-width="1">
<path d="M225.6 151.3 L229.4 151.3 L229.4 156.3 M225.6 151.3 L225.6 156.3"/>
<rect x="228" y="151.3" width="1.5" height="5" fill="#999" stroke="none"/>
<path d="M224.1 156.6 L231.1 156.6 M227.5 156.6 L227.5 160"/>
</g>
<g transform="translate(0 246.5)" fill="none" stroke="#999" stroke-width="1">
<path d="M225.6 151.3 L229.4 151.3 L229.4 156.3 M225.6 151.3 L225.6 156.3"/>
<rect x="228" y="151.3" width="1.5" height="5" fill="#999" stroke="none"/>
<path d="M224.1 156.6 L231.1 156.6 M227.5 156.6 L227.5 160"/>
</g>
<g transform="translate(0 493.5)" fill="none" stroke="#999" stroke-width="1">
<path d="M225.6 151.3 L229.4 151.3 L229.4 156.3 M225.6 151.3 L225.6 156.3"/>
<rect x="228" y="151.3" width="1.5" height="5" fill="#999" stroke="none"/>
<path d="M224.1 156.6 L231.1 156.6 M227.5 156.6 L227.5 160"/>
</g>
<!-- tree expand triangles -->
<path d="M12.3 181 L19 174.2 L19 181 Z" fill="#595959"/>
<path d="M32.5 222.6 L36.8 226 L32.5 229.4 Z" fill="#fff" stroke="#333" stroke-width="0.9"/>
<!-- checkboxes -->
<g id="cb1">
<rect x="25.6" y="172" width="11.8" height="11.6" fill="#fff" stroke="#8e8e8e" stroke-width="1"/>
<rect x="26.9" y="173.3" width="9.2" height="9" fill="none" stroke="#d8d8d8" stroke-width="0.8"/>
<path d="M28.3 177.8 L30.5 180.3 L34.8 174.8" fill="none" stroke="#000" stroke-width="1.7"/>
</g>
<g transform="translate(18.9 15.7)">
<rect x="25.6" y="172" width="11.8" height="11.6" fill="#fff" stroke="#8e8e8e" stroke-width="1"/>
<rect x="26.9" y="173.3" width="9.2" height="9" fill="none" stroke="#d8d8d8" stroke-width="0.8"/>
<path d="M28.3 177.8 L30.5 180.3 L34.8 174.8" fill="none" stroke="#000" stroke-width="1.7"/>
</g>
<g transform="translate(18.9 31.5)">
<rect x="25.6" y="172" width="11.8" height="11.6" fill="#fff" stroke="#8e8e8e" stroke-width="1"/>
<rect x="26.9" y="173.3" width="9.2" height="9" fill="none" stroke="#d8d8d8" stroke-width="0.8"/>
<path d="M28.3 177.8 L30.5 180.3 L34.8 174.8" fill="none" stroke="#000" stroke-width="1.7"/>
</g>
<g transform="translate(18.9 47.4)">
<rect x="25.6" y="172" width="11.8" height="11.6" fill="#fff" stroke="#8e8e8e" stroke-width="1"/>
<rect x="26.9" y="173.3" width="9.2" height="9" fill="none" stroke="#d8d8d8" stroke-width="0.8"/>
<path d="M28.3 177.8 L30.5 180.3 L34.8 174.8" fill="none" stroke="#000" stroke-width="1.7"/>
</g>
<!-- doc icon -->
<path d="M42.2 169.5 L50.5 169.5 L54 173 L54 183.8 L42.2 183.8 Z" fill="#f8f8fc" stroke="#8a98b8" stroke-width="0.9"/>
<path d="M50.5 169.5 L50.5 173 L54 173" fill="none" stroke="#8a98b8" stroke-width="0.7"/>
<path d="M44 178.5 L50.5 175.5 L56 178.5 L56 181 L49.5 184.3 L44 181 Z" fill="#f8d0a0" stroke="#704020" stroke-width="0.7"/>
<path d="M44 178.5 L49.5 181.5 L56 178.5 M49.5 181.5 L49.5 184.3" fill="none" stroke="#704020" stroke-width="0.6"/>
<!-- green cubes -->
<g id="gc1">
<path d="M61.8 188.5 L67 186 L73.8 188 L73.8 197.5 L68.5 200 L61.8 198 Z" fill="#1a7a2a"/>
<path d="M62.8 189.3 L68 190.6 L68 198.8 L62.8 197.4 Z" fill="#b8f4b0"/>
<path d="M63 188.6 L67 186.8 L72.6 188.3 L68.5 190 Z" fill="#90e088"/>
<path d="M68.8 190.4 L72.8 188.8 L72.8 197 L68.8 198.8 Z" fill="#5cc45c"/>
</g>
<g transform="translate(0 15.8)">
<path d="M61.8 188.5 L67 186 L73.8 188 L73.8 197.5 L68.5 200 L61.8 198 Z" fill="#1a7a2a"/>
<path d="M62.8 189.3 L68 190.6 L68 198.8 L62.8 197.4 Z" fill="#b8f4b0"/>
<path d="M63 188.6 L67 186.8 L72.6 188.3 L68.5 190 Z" fill="#90e088"/>
<path d="M68.8 190.4 L72.8 188.8 L72.8 197 L68.8 198.8 Z" fill="#5cc45c"/>
</g>
<!-- folder -->
<path d="M61 221 L61 231 C61 231.8 61.6 232 62.4 231.8 L73.2 229.5 L73.2 219.5 L67.5 220.3 L66.5 218.8 L62.2 219.8 C61.5 220 61 220.3 61 221 Z" fill="#e8c850" stroke="#907020" stroke-width="0.8"/>
<path d="M61.3 231.6 L62.5 223 L73.8 220.8 L73.2 229.5 Z" fill="#f8e480" stroke="#907020" stroke-width="0.7"/>
<!-- props tab bar border lines done by blocks -->
<!-- doc tab -->
<rect x="241" y="960" width="1" height="25" fill="#555"/>
<rect x="242" y="960" width="993" height="1" fill="#666"/>
<rect x="242" y="961" width="3" height="24" fill="#fff"/>
<path d="M245.5 960.5 L245.5 981.3 L316.7 981.3 L316.7 960.5" fill="#f5f5fa" stroke="#3c6382" stroke-width="1"/>
<rect x="245.5" y="980.6" width="71.2" height="1.2" fill="#3c6382"/>
<!-- doc tab icon: stepped block -->
<path d="M249.5 966 L254.5 963.3 L259 965.5 L259 969 L264.5 971.5 L264.5 975.5 L259.5 978.8 L249.5 973 Z" fill="#f8d0a0" stroke="#201000" stroke-width="0.9" stroke-linejoin="round"/>
<path d="M249.5 966 L254.5 968.5 L259 965.5 M254.5 968.5 L254.5 972 L259.5 975 L264.5 971.5 M259.5 975 L259.5 978.8 M254.5 972 L259 969" fill="none" stroke="#201000" stroke-width="0.8"/>
<path d="M259.5 975 L264.5 971.5 L264.5 975.5 L259.5 978.8 Z" fill="#e0a870"/>
<path d="M304.8 968.3 L311 974.5 M311 968.3 L304.8 974.5" stroke="#555" stroke-width="1.3"/>
<!-- doc tab right icons -->
<path d="M1200.6 966.3 L1196.3 970.6 L1200.6 974.9 Z" fill="none" stroke="#222" stroke-width="0.9"/>
<path d="M1210.5 966.3 L1214.8 970.6 L1210.5 974.9 Z" fill="none" stroke="#222" stroke-width="0.9"/>
<path d="M1223.3 967.2 L1230.6 974.2 M1230.6 967.2 L1223.3 974.2" stroke="#333" stroke-width="1.2"/>
<!-- right strip vertical tab -->
<rect x="1236.5" y="148.5" width="20" height="27" fill="#f8f8fb"/>
<rect x="1256" y="148.5" width="5" height="61" fill="#cfcfcf"/>
<!-- highlight edge -->
<path d="M664.4 222.83 L716 318.5" stroke="#a8dcff" stroke-width="5.6" stroke-linecap="butt"/>
<path d="M664.4 222.83 L716 318.5" stroke="#2b8be6" stroke-width="3.8"/>
<path d="M664.4 222.83 L716 318.5" stroke="#001438" stroke-width="1.5"/>
<!-- dashed line -->
<path d="M685.3 526 L685.3 888" stroke="#163a1c" stroke-width="1.1" stroke-dasharray="4.5 2"/>
<!-- model triad -->
<path d="M738.3 815 L738.3 780" stroke="#8a8a8a" stroke-width="2.2"/>
<path d="M738.3 774 L741 788 L735.6 788 Z" fill="#5a82e8"/>
<path d="M738.3 815 L758 799" stroke="#6a9a30" stroke-width="2"/>
<path d="M762.3 794.4 L753.5 798.5 L757.8 803 Z" fill="#208a20"/>
<path d="M738.3 815 L770 823" stroke="#e83010" stroke-width="2"/>
<path d="M778.7 826.8 L765.5 820 L764.3 826.2 Z" fill="#e01010"/>
<circle cx="738.3" cy="815" r="2" fill="#a0a0a0"/>
<text x="733.8" y="768.5" font-family="Liberation Sans" font-weight="bold" font-size="11" fill="#6a5088">Z</text>
<text x="764" y="793.8" font-family="Liberation Sans" font-weight="bold" font-size="11" fill="#7a9a20">Y</text>
<text x="785.8" y="834.6" font-family="Liberation Sans" font-weight="bold" font-size="11" fill="#e83818">X</text>
<!-- corner triad -->
<path d="M289.5 891.3 L301 884 L316.5 888.7 L316 905.5 L307.2 914 L290.4 908 Z" fill="#dde8f8" stroke="#b0b8c8" stroke-width="0.7"/>
<path d="M307.2 895.8 L316.5 888.7 L316 905.5 L307.2 914 Z" fill="#c0c8e0" stroke="#b0b8c8" stroke-width="0.6"/>
<path d="M289.5 891.3 L307.2 895.8 L307.2 914" fill="none" stroke="#b0b8c8" stroke-width="0.6"/>
<ellipse cx="303.5" cy="888.8" rx="3.6" ry="2.6" fill="#1010e0"/>
<circle cx="298.3" cy="903.2" r="3.8" fill="#10a010"/>
<ellipse cx="313" cy="901" rx="2.6" ry="3.2" fill="#f01010"/>
<path d="M303.5 882.5 L303.5 872" stroke="#1010e0" stroke-width="1.4"/>
<path d="M303.5 866.8 L306.2 878.5 L300.8 878.5 Z" fill="#1010e0"/>
<path d="M319 903 L328 905.5" stroke="#f01010" stroke-width="1.4"/>
<path d="M334.6 907.4 L325.5 902.5 L324.5 907.5 Z" fill="#f01010"/>
<text x="299.4" y="862.2" font-family="Liberation Sans" font-weight="bold" font-size="11" fill="#1a1ae0">Z</text>
<text x="313.8" y="890" font-family="Liberation Sans" font-weight="bold" font-size="10.5" fill="#208a20">Y</text>
<text x="338.4" y="914.5" font-family="Liberation Sans" font-weight="bold" font-size="11" fill="#f01818">X</text>
<!-- scale bar -->
<rect x="1149.7" y="928" width="70.3" height="2" fill="#3a3acc"/>
<rect x="675" y="988" width="28" height="28" fill="#4a7199"/>
<rect x="674.5" y="990" width="1" height="24" fill="#6a8aa8"/>
<path d="M685.8 994.2 L692.2 994.2 L696.7 998.7 L696.7 1005.1 L692.2 1009.6 L685.8 1009.6 L681.3 1005.1 L681.3 998.7 Z" fill="#f00000" stroke="#ffc8c8" stroke-width="1"/>
<circle cx="714.9" cy="1001.9" r="6.3" fill="#e04040" stroke="#b83030" stroke-width="0.5"/>
<rect x="714" y="997" width="1.9" height="6" fill="#fff"/><rect x="714" y="1004.5" width="1.9" height="1.9" fill="#fff"/>
<path d="M727.2 1004 L733.6 1004 L730.4 1000 Z" fill="#fff"/>
<rect x="738.3" y="990.5" width="1" height="23" fill="#6a8aa8"/>
<rect x="838.3" y="990.5" width="1" height="23" fill="#6a8aa8"/>
<rect x="523" y="990.5" width="1" height="23" fill="#6a8aa8"/>
<path d="M992.2 998.8 L1002.2 998.8 L997.2 993.9 Z" fill="#7b8c9c"/>
<path d="M992.2 1005 L1002.2 1005 L997.2 1010.5 Z" fill="#7b8c9c"/>
<path d="M1010.3 995.5 L1010.3 1007 L1013 1004.8 L1015 1009 L1017 1008 L1015 1003.8 L1018.3 1003.6 Z" fill="#fff" stroke="#111" stroke-width="0.7"/>
<path d="M1019.5 997 C1024 995 1027 999 1024.5 1002.5 C1023.5 1004 1022 1005 1020.5 1006" fill="none" stroke="#68b8f0" stroke-width="1.5"/>
<path d="M1017.5 996.5 L1021.5 994 L1021 999 Z" fill="#68b8f0"/>
<path d="M1036.3 995.5 L1036.3 1007 L1039 1004.8 L1041 1009 L1043 1008 L1041 1003.8 L1044.3 1003.6 Z" fill="#fff" stroke="#111" stroke-width="0.7"/>
<path d="M1053.7 1004.4 L1061.4 1004.4 L1057.5 1000.5 Z" fill="#fff"/>
<rect x="1069.8" y="996" width="14.4" height="11.8" fill="none" stroke="#88c4f0" stroke-width="1.4" stroke-dasharray="3 2.2"/>
<path d="M1089.1 1004.4 L1096.3 1004.4 L1092.7 1000.5 Z" fill="#fff"/>
<rect x="1100.3" y="990" width="1" height="24" fill="#8aa0b8"/>
<g transform="translate(938.1 932.6)"><g fill="#78c0f0">
<path d="M176.8 64 C176.3 67.5 176.3 71 175.3 74.8" fill="none" stroke="#78c0f0" stroke-width="1.9"/>
<path d="M170.5 68.3 C174 67.8 178 68.3 181.5 69.6" fill="none" stroke="#78c0f0" stroke-width="1.9"/>
<path d="M172.3 61.6 L178.8 63.4 L172.3 65.2 Z"/>
<path d="M172.3 73 L177.2 75.2 L172.3 77 Z"/>
<path d="M167.2 69.6 L169.6 65.8 L171.6 70.8 Z"/>
<path d="M182.8 67 L179.2 72.3 L182.8 71.8 Z"/>
</g></g>
<path d="M1125.1 1003.8 L1132 1003.8 L1128.5 999.8 Z" fill="#fff"/>
<g fill="#78c0f0">
<rect x="1147" y="997.5" width="2" height="10"/>
<rect x="1143" y="1001.5" width="10" height="2"/>
<path d="M1148 994.7 L1151.2 998 L1144.8 998 Z"/>
<path d="M1148 1010 L1151.2 1006.8 L1144.8 1006.8 Z"/>
<path d="M1140 1002.5 L1143.3 999.3 L1143.3 1005.7 Z"/>
<path d="M1156 1002.5 L1152.7 999.3 L1152.7 1005.7 Z"/>
</g>
<circle cx="1171" cy="1000.9" r="5" fill="#fff" stroke="#a8d8f8" stroke-width="1.6"/>
<path d="M1174.6 1004.5 L1179 1008.9" stroke="#78c0f0" stroke-width="3"/>
<path d="M1183.8 1003.8 L1191.2 1003.8 L1187.5 999.8 Z" fill="#fff"/>
<path d="M1214.9 1000.2 L1206 1004.5" stroke="#78c0f0" stroke-width="3.4"/>
<path d="M1198.9 1006.8 L1203.3 999.2 L1206.9 1007 Z" fill="#78c0f0"/>
<path d="M1223.5 1005 L1232 1000.6" stroke="#78c0f0" stroke-width="3.4"/>
<path d="M1239.1 996.9 L1231.2 997 L1234.5 1004.8 Z" fill="#78c0f0"/>

</svg>
<div class='a' style='left:599.30px;top:6.13px;font-size:12px;font-weight:normal;font-style:normal;color:#fff;transform:scale(0.9793,0.9667);'>test1 - DesignSpark Mechanical</div>
<div class='a' style='left:12.97px;top:34.38px;font-size:13px;font-weight:normal;font-style:normal;color:#fff;transform:scale(1.0269,0.9200);'>ﾌｧｲﾙ</div>
<div class='a' style='left:72.11px;top:34.90px;font-size:13px;font-weight:normal;font-style:normal;color:#1e1e1e;transform:scale(0.8850,0.8727);'>ﾃﾞｻﾞｲﾝ</div>
<div class='a' style='left:134.81px;top:34.90px;font-size:13px;font-weight:normal;font-style:normal;color:#fff;transform:scale(0.9875,0.7923);'>表示</div>
<div class='a' style='left:187.21px;top:35.30px;font-size:13px;font-weight:normal;font-style:normal;color:#fff;transform:scale(1.0879,0.7917);'>ﾍﾙﾌﾟ/ﾘｿｰｽ</div>
<div class='a' style='left:12.04px;top:96.50px;font-size:13px;font-weight:normal;font-style:normal;color:#000;transform:scale(0.9576,0.8750);'>ﾍﾟｰｽﾄ</div>
<div class='a' style='left:12.14px;top:126.00px;font-size:13px;font-weight:normal;font-style:normal;color:#000;transform:scale(0.8636,0.9167);'>ｸﾘｯﾌﾟﾎﾞｰﾄﾞ</div>
<div class='a' style='left:107.50px;top:61.14px;font-size:13px;font-weight:normal;font-style:normal;color:#000;transform:scale(1.1900,1.0600);'>ﾎｰﾑ</div>
<div class='a' style='left:186.11px;top:62.20px;font-size:13px;font-weight:normal;font-style:normal;color:#000;transform:scale(0.8885,0.9636);'>ｽﾋﾟﾝ</div>
<div class='a' style='left:107.20px;top:83.50px;font-size:13px;font-weight:normal;font-style:normal;color:#a3a3a3;transform:scale(0.9019,0.8917);'>平面ﾋﾞｭｰ</div>
<div class='a' style='left:186.09px;top:83.50px;font-size:13px;font-weight:normal;font-style:normal;color:#000;transform:scale(0.9053,0.9727);'>ﾊﾟﾝ</div>
<div class='a' style='left:186.00px;top:107.20px;font-size:13px;font-weight:normal;font-style:normal;color:#000;transform:scale(1.0038,0.9182);'>ｽﾞｰﾑ</div>
<div class='a' style='left:147.09px;top:125.08px;font-size:13px;font-weight:normal;font-style:normal;color:#000;transform:scale(0.9091,0.9167);'>向き</div>
<div class='a' style='left:313.15px;top:125.83px;font-size:13px;font-weight:normal;font-style:normal;color:#000;transform:scale(1.0462,0.9700);'>ｽｹｯﾁ</div>
<div class='a' style='left:423.60px;top:126.80px;font-size:13px;font-weight:normal;font-style:normal;color:#000;transform:scale(1.0000,0.8083);'>ﾓｰﾄﾞ</div>
<div class='a' style='left:465.62px;top:96.00px;font-size:13px;font-weight:normal;font-style:normal;color:#000;transform:scale(0.9750,0.8308);'>選択</div>
<div class='a' style='left:508.84px;top:96.50px;font-size:13px;font-weight:normal;font-style:normal;color:#000;transform:scale(0.9579,0.9364);'>ﾌﾟﾙ</div>
<div class='a' style='left:548.80px;top:95.10px;font-size:13px;font-weight:normal;font-style:normal;color:#000;transform:scale(0.9280,0.9000);'>移動</div>
<div class='a' style='left:591.05px;top:94.82px;font-size:13px;font-weight:normal;font-style:normal;color:#000;transform:scale(0.9474,1.0889);'>ﾌｨﾙ</div>
<div class='a' style='left:541.00px;top:125.87px;font-size:13px;font-weight:normal;font-style:normal;color:#000;transform:scale(0.9440,0.8333);'>編集</div>
<div class='a' style='left:660.80px;top:95.10px;font-size:13px;font-weight:normal;font-style:normal;color:#000;transform:scale(0.8718,0.9000);'>組合せ</div>
<div class='a' style='left:727.00px;top:62.00px;font-size:13px;font-weight:normal;font-style:normal;color:#000;transform:scale(0.8617,0.8923);'>ﾎﾞﾃﾞｨ分割</div>
<div class='a' style='left:727.00px;top:83.48px;font-size:13px;font-weight:normal;font-style:normal;color:#000;transform:scale(0.8261,0.9250);'>割り</div>
<div class='a' style='left:728.00px;top:105.90px;font-size:13px;font-weight:normal;font-style:normal;color:#000;transform:scale(0.9200,0.9000);'>投影</div>
<div class='a' style='left:707.02px;top:126.00px;font-size:13px;font-weight:normal;font-style:normal;color:#000;transform:scale(0.9750,0.8231);'>交差</div>
<div class='a' style='left:855.66px;top:96.66px;font-size:13px;font-weight:normal;font-style:normal;color:#000;transform:scale(1.0385,0.9400);'>ﾌｧｲﾙ</div>
<div class='a' style='left:898.92px;top:96.17px;font-size:13px;font-weight:normal;font-style:normal;color:#000;transform:scale(0.8800,0.8333);'>PCB をｲﾝ</div>
<div class='a' style='left:912.00px;top:109.00px;font-size:13px;font-weight:normal;font-style:normal;color:#000;transform:scale(0.9259,0.8667);'>ﾎﾟｰﾄ</div>
<div class='a' style='left:961.60px;top:97.00px;font-size:13px;font-weight:normal;font-style:normal;color:#000;transform:scale(0.8955,0.8333);'>3Dﾓﾃﾞﾙのﾀﾞｳﾝﾛｰﾄﾞ</div>
<div class='a' style='left:918.00px;top:126.00px;font-size:13px;font-weight:normal;font-style:normal;color:#000;transform:scale(0.9040,0.8462);'>挿入</div>
<div class='a' style='left:1078.40px;top:97.70px;font-size:13px;font-weight:normal;font-style:normal;color:#000;transform:scale(0.9354,0.8583);'>ｴｸｽﾎﾟｰﾄ</div>
<div class='a' style='left:1078.11px;top:114.00px;font-size:13px;font-weight:normal;font-style:normal;color:#000;transform:scale(0.8900,0.9455);'>ｵﾌﾟｼｮﾝ</div>
<div class='a' style='left:1090.81px;top:126.80px;font-size:13px;font-weight:normal;font-style:normal;color:#000;transform:scale(0.9913,0.8500);'>出力</div>
<div class='a' style='left:1150.80px;top:100.00px;font-size:13px;font-weight:normal;font-style:normal;color:#000;transform:scale(0.9440,0.8462);'>調査</div>
<div class='a' style='left:1202.62px;top:100.00px;font-size:13px;font-weight:normal;font-style:normal;color:#000;transform:scale(0.9750,0.8462);'>注文</div>
<div class='a' style='left:7.10px;top:149.29px;font-size:13px;font-weight:normal;font-style:normal;color:#000;transform:scale(1.0000,0.9091);'>ｽﾄﾗｸﾁｬｰ</div>
<div class='a' style='left:63.20px;top:171.54px;font-size:12px;font-weight:bold;font-style:normal;color:#000;transform:scale(1.0485,0.9556);'>test1*</div>
<div class='a' style='left:81.44px;top:187.92px;font-size:12px;font-weight:normal;font-style:normal;color:#1a1a1a;transform:scale(0.9600,0.9778);'>Solid</div>
<div class='a' style='left:81.44px;top:203.79px;font-size:12px;font-weight:normal;font-style:normal;color:#1a1a1a;transform:scale(0.9600,1.0111);'>Solid</div>
<div class='a' style='left:81.02px;top:217.95px;font-size:13px;font-weight:normal;font-style:italic;color:#000;transform:scale(1.0808,1.0500);'>ｶｰﾌﾞ</div>
<div class='a' style='left:7.27px;top:396.20px;font-size:13px;font-weight:normal;font-style:normal;color:#000;transform:scale(0.8348,0.9909);'>ﾌﾟﾛﾊﾟﾃｨ</div>
<div class='a' style='left:10.51px;top:616.10px;font-size:13px;font-weight:normal;font-style:normal;color:#3c6d96;transform:scale(0.8870,0.9909);'>ﾌﾟﾛﾊﾟﾃｨ</div>
<div class='a' style='left:64.42px;top:615.56px;font-size:13px;font-weight:normal;font-style:normal;color:#000;transform:scale(1.0789,1.0400);'>ﾚｲﾔ</div>
<div class='a' style='left:7.20px;top:643.20px;font-size:13px;font-weight:normal;font-style:normal;color:#000;transform:scale(0.9000,0.8385);'>ｵﾌﾟｼｮﾝ - 選択</div>
<div class='a' style='left:10.90px;top:964.00px;font-size:13px;font-weight:normal;font-style:normal;color:#3c6d96;transform:scale(0.9038,0.8462);'>ｵﾌﾟｼｮﾝ - 選択</div>
<div class='a' style='left:94.72px;top:964.20px;font-size:13px;font-weight:normal;font-style:normal;color:#000;transform:scale(0.9833,0.8308);'>選択</div>
<div class='a' style='left:268.30px;top:965.84px;font-size:12px;font-weight:bold;font-style:normal;color:#2f5f8a;transform:scale(0.9909,0.9056);'>test1*</div>
<div class='a' style='left:255.01px;top:158.70px;font-size:13px;font-weight:normal;font-style:normal;color:#505050;transform:scale(0.9860,0.9846);'>ｵﾌﾞｼﾞｪｸﾄをｸﾘｯｸします。ﾀﾞﾌﾞﾙｸﾘｯｸして、ｴｯｼﾞﾙｰﾌﾟを選択します。ﾄﾘﾌﾟﾙｸﾘｯｸしてｿﾘｯﾄﾞを選択します。</div>
<div class='a' style='left:7.99px;top:996.30px;font-size:13px;font-weight:normal;font-style:normal;color:#fff;transform:scale(0.7090,0.8231);'>ｵﾌﾞ ｼﾞ ｪｸﾄをｸﾘｯｸします｡ﾀﾞ ﾌﾞ ﾙｸﾘｯｸして､ｴｯｼﾞ ﾙｰﾌﾟ を選択します｡ﾄﾘﾌﾟ ﾙｸﾘｯｸしてｿﾘｯﾄﾞ を選択します.</div>
<div class='a' style='left:1170.60px;top:931.88px;font-size:11px;font-weight:normal;font-style:normal;color:#3333cc;transform:scale(0.9800,1.1250);'>20mm</div><div class="a" style="left:1257px;top:155px;font-size:12px;transform:rotate(90deg);transform-origin:0 0;color:#000">ｸｲｯｸｶﾞｲﾄﾞ</div>
<svg style="position:absolute;left:0;top:0" width="1264" height="1017" viewBox="0 0 1264 1017">
<path d="M473.5 97.8 L473.5 112.6 L476.9 109.4 L479.6 115.2 L482.2 114 L479.6 108.3 L484.3 108.3 Z" fill="#fff" stroke="#000" stroke-width="0.9" stroke-linejoin="miter"/>
</svg>

</body></html>
